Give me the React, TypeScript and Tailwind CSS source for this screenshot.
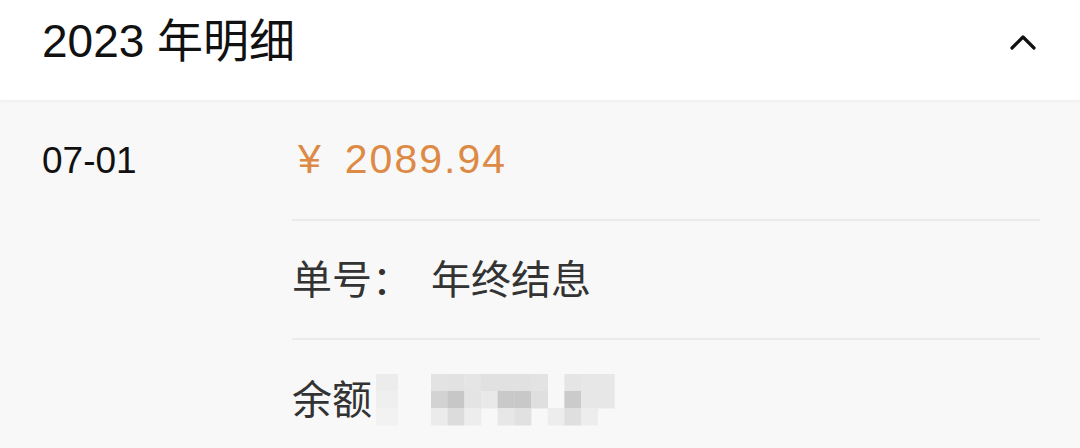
import React from "react";

// [col, row, color]; col -1 is the light left strip, 0..10 are main mosaic columns
const cells: [number, number, string][] = [
  [-1, 0, "#ececec"], [-1, 1, "#efefef"], [-1, 2, "#f2f2f2"],
  // row 0
  [0, 0, "#e3e3e3"], [1, 0, "#e2e2e2"], [2, 0, "#e5e5e5"], [3, 0, "#e1e1e1"], [4, 0, "#e1e1e1"], [5, 0, "#e1e1e1"], [6, 0, "#e3e3e3"], [8, 0, "#e5e5e5"], [9, 0, "#e7e7e7"], [10, 0, "#e7e7e7"],
  // row 1
  [0, 1, "#d3d3d3"], [1, 1, "#c7c7c7"], [2, 1, "#e4e4e4"], [3, 1, "#e9e9e9"], [4, 1, "#c9c9c9"], [5, 1, "#c8c8c8"], [6, 1, "#dfdfdf"], [8, 1, "#cbcbcb"], [9, 1, "#e7e7e7"], [10, 1, "#e7e7e7"],
  // row 2
  [0, 2, "#ebebeb"], [1, 2, "#dcdcdc"], [2, 2, "#ededed"], [4, 2, "#e7e7e7"], [5, 2, "#e1e1e1"], [7, 2, "#ededed"], [8, 2, "#dfdfdf"], [9, 2, "#ededed"],
];

function Mosaic() {
  return (
    <svg width="240" height="52" viewBox="0 0 240 52" className="block">
      {cells.map(([c, r, color], i) => (
        <rect
          key={i}
          x={c < 0 ? 0 : 55 + c * 16.67}
          y={r * 17}
          width={c < 0 ? 22 : 17}
          height="17.5"
          fill={color}
        />
      ))}
    </svg>
  );
}

export default function App() {
  return (
    <div
      className="w-[1080px] h-[448px] overflow-hidden bg-[#f8f8f8]"
      style={{ fontFamily: '"Liberation Sans", "Noto Sans CJK SC", sans-serif' }}
    >
      <div className="h-[100px] bg-white flex items-center justify-between pl-[42px] pr-[44px] shadow-[0_1px_3px_rgba(0,0,0,0.05)] relative">
        <div className="text-[46px] leading-none text-[#111] -mt-[18px]">2023 年明细</div>
        <svg width="26" height="18" viewBox="0 0 26 18" className="-mt-[17px]">
          <polyline points="2,15 13,4 24,15" fill="none" stroke="#111" strokeWidth="3.2" strokeLinecap="round" strokeLinejoin="round" />
        </svg>
      </div>
      <div className="flex">
        <div className="w-[292px] shrink-0">
          <div className="h-[121px] flex items-center pl-[42px] text-[37px] leading-none text-[#111]">07-01</div>
        </div>
        <div className="flex-1 mr-[40px]">
          <div className="h-[121px] flex items-center border-b-2 border-[#ebebeb] pl-[6px] text-[41px] leading-none text-[#dc8a45]">
            <span>¥</span>
            <span className="ml-[24px] tracking-[2px]">2089.94</span>
          </div>
          <div className="h-[119px] flex items-center border-b-2 border-[#ebebeb] text-[40px] leading-none text-[#333]">
            <span>单号：</span>
            <span className="ml-[19px]">年终结息</span>
          </div>
          <div className="h-[120px] flex items-center text-[40px] leading-none text-[#333]">
            <span>余额</span>
            <span className="ml-[4px]">
              <Mosaic />
            </span>
          </div>
        </div>
      </div>
    </div>
  );
}
